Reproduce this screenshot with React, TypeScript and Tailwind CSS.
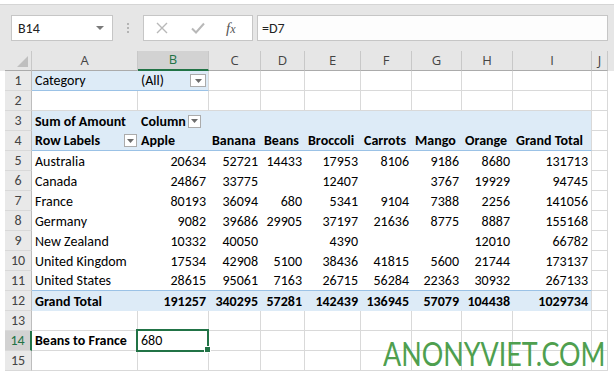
import React from 'react';

const W = ['w-[106px]', 'w-[71px]', 'w-[52px]', 'w-[44px]', 'w-[56px]', 'w-[51px]', 'w-[50px]', 'w-[51px]', 'w-[79px]', 'w-[16px]'];
const COLS = ['A', 'B', 'C', 'D', 'E', 'F', 'G', 'H', 'I', 'J'];
const FRUITS = ['Apple', 'Banana', 'Beans', 'Broccoli', 'Carrots', 'Mango', 'Orange', 'Grand Total'];

type Row = [string, ...(number | null)[]];

const DATA: Row[] = [
  ['Australia', 20634, 52721, 14433, 17953, 8106, 9186, 8680, 131713],
  ['Canada', 24867, 33775, null, 12407, null, 3767, 19929, 94745],
  ['France', 80193, 36094, 680, 5341, 9104, 7388, 2256, 141056],
  ['Germany', 9082, 39686, 29905, 37197, 21636, 8775, 8887, 155168],
  ['New Zealand', 10332, 40050, null, 4390, null, null, 12010, 66782],
  ['United Kingdom', 17534, 42908, 5100, 38436, 41815, 5600, 21744, 173137],
  ['United States', 28615, 95061, 7163, 26715, 56284, 22363, 30932, 267133],
];
const TOTAL: Row = ['Grand Total', 191257, 340295, 57281, 142439, 136945, 57079, 104438, 1029734];

const FONT = "font-['Carlito','Lato',sans-serif]";

function Drop({ w = 'w-[13px]' }: { w?: string }) {
  return (
    <span className={`${w} h-[13px] shrink-0 bg-white border border-[#ababab] flex items-center justify-center`}>
      <svg width="7" height="4" viewBox="0 0 7 4">
        <path d="M0 0 H7 L3.5 4 Z" fill="#6d6d6d" />
      </svg>
    </span>
  );
}

function RowHead({ n, active }: { n: number; active?: boolean }) {
  return (
    <div
      className={`w-[27px] h-full shrink-0 box-border flex items-center justify-center border-b border-[#d9d9d9] ${
        active ? 'bg-[#d2d2d2] text-[#217346] border-r-2 border-r-[#217346]' : 'bg-[#e9e9e9] text-[#444] border-r border-r-[#bdbdbd]'
      }`}
    >
      {n}
    </div>
  );
}

// plain grid cell
function G({ c, children, bold, right, extra = '' }: { c: number; children?: React.ReactNode; bold?: boolean; right?: boolean; extra?: string }) {
  return (
    <div
      className={`${W[c]} h-full shrink-0 box-border border-r border-b border-[#d9d9d9] flex items-center px-[3px] whitespace-nowrap ${
        right ? 'justify-end' : ''
      } ${bold ? 'font-bold' : ''} ${extra}`}
    >
      {children}
    </div>
  );
}

// pivot cell: no gridlines, col I keeps the right gridline
function P({
  c,
  children,
  bold,
  right,
  blue,
  bottom,
}: {
  c: number;
  children?: React.ReactNode;
  bold?: boolean;
  right?: boolean;
  blue?: boolean;
  bottom?: boolean;
}) {
  return (
    <div
      className={`${W[c]} h-full shrink-0 box-border flex items-center px-[3px] whitespace-nowrap ${right ? 'justify-end' : ''} ${
        bold ? 'font-bold' : ''
      } ${blue ? 'bg-[#ddebf7]' : ''} ${bottom ? 'border-b border-[#9bc2e6]' : ''} ${c === 8 ? 'border-r border-r-[#d9d9d9]' : ''}`}
    >
      {children}
    </div>
  );
}

function DataRow({ n, row, total, last }: { n: number; row: Row; total?: boolean; last?: boolean }) {
  return (
    <div className="flex h-[20px]">
      <RowHead n={n} />
      <P c={0} bold={total} blue={total} bottom={last}>
        {row[0]}
      </P>
      {row.slice(1).map((v, i) => (
        <P key={i} c={i + 1} right bold={total} blue={total} bottom={last}>
          {v ?? ''}
        </P>
      ))}
      <G c={9} />
    </div>
  );
}

function EmptyRow({ n }: { n: number }) {
  return (
    <div className="flex h-[20px]">
      <RowHead n={n} />
      {COLS.map((_, i) => (
        <G key={i} c={i} />
      ))}
    </div>
  );
}

export default function App() {
  return (
    <div className={`relative w-[614px] h-[375px] overflow-hidden bg-white text-[14px] text-black ${FONT}`}>
      {/* formula bar */}
      <div className="mt-[4px] h-[47px] border-t border-[#d5d5d5] bg-[#e6e6e6] flex items-start pt-[10px] pl-[11px]">
        <div className="w-[102px] h-[26px] box-border bg-white border border-[#c6c6c6] flex items-center justify-between pl-[6px] pr-[8px] text-[#222]">
          <span>B14</span>
          <svg width="8" height="4" viewBox="0 0 8 4">
            <path d="M0 0 H8 L4 4 Z" fill="#7a7a7a" />
          </svg>
        </div>
        <div className="w-[30px] h-[26px] flex flex-col items-center justify-center gap-[2px]">
          <span className="w-[2px] h-[2px] bg-[#b4b4b4]" />
          <span className="w-[2px] h-[2px] bg-[#b4b4b4]" />
          <span className="w-[2px] h-[2px] bg-[#b4b4b4]" />
        </div>
        <div className="w-[110px] h-[26px] box-border bg-white border border-[#c6c6c6] flex items-center pl-[12px]">
          <svg width="12" height="12" viewBox="0 0 12 12" className="mr-[23px]">
            <path d="M1 1 L11 11 M11 1 L1 11" stroke="#b8b8b8" strokeWidth="1.4" />
          </svg>
          <svg width="14" height="12" viewBox="0 0 14 12" className="mr-[21px]">
            <path d="M1 6.5 L5 10.5 L13 1.5" stroke="#b8b8b8" strokeWidth="2" fill="none" />
          </svg>
          <span className="font-['Liberation_Serif',serif] italic text-[15px] text-[#555]">
            f<span className="text-[12px]">x</span>
          </span>
        </div>
        <div className="ml-[4px] w-[351px] h-[26px] box-border bg-[#fdfdfd] border border-[#c6c6c6] flex items-center pl-[4px] text-[#222]">
          =D7
        </div>
      </div>

      {/* column headers */}
      <div className="flex h-[20px] bg-[#e6e6e6] pl-[5px] text-[#444] font-['Open_Sans',sans-serif] text-[13px]">
        <div className="w-[27px] h-full shrink-0 box-border border-r border-b border-[#ababab] border-r-[#c8c8c8] flex items-end justify-end p-[3px]">
          <svg width="11" height="11" viewBox="0 0 11 11">
            <path d="M11 0 V11 H0 Z" fill="#bfbfbf" />
          </svg>
        </div>
        {COLS.map((l, i) => (
          <div
            key={l}
            className={`${W[i]} h-full shrink-0 box-border border-r border-r-[#c8c8c8] flex items-center justify-center ${
              i === 1 ? 'bg-[#d2d2d2] border-b-2 border-b-[#217346] text-[#217346]' : 'border-b border-b-[#ababab]'
            }`}
          >
            {l}
          </div>
        ))}
      </div>

      {/* sheet */}
      <div className="pl-[5px]">
        {/* row 1 */}
        <div className="flex h-[20px]">
          <RowHead n={1} />
          <div className={`${W[0]} h-full shrink-0 box-border bg-[#ddebf7] border-b border-[#9bc2e6] flex items-center px-[3px]`}>Category</div>
          <div className={`${W[1]} h-full shrink-0 box-border bg-[#ddebf7] border-b border-[#9bc2e6] border-r border-r-[#d9d9d9] flex items-center justify-between pl-[3px] pr-[2px]`}>
            <span>(All)</span>
            <Drop w="w-[16px]" />
          </div>
          {COLS.slice(2).map((_, i) => (
            <G key={i} c={i + 2} />
          ))}
        </div>

        <EmptyRow n={2} />

        {/* row 3 */}
        <div className="flex h-[20px]">
          <RowHead n={3} />
          <P c={0} bold blue>
            Sum of Amount
          </P>
          <P c={1} bold blue>
            <span className="mr-[2px]">Column</span>
            <Drop />
          </P>
          {[2, 3, 4, 5, 6, 7, 8].map((c) => (
            <P key={c} c={c} blue />
          ))}
          <G c={9} />
        </div>

        {/* row 4 */}
        <div className="flex h-[20px]">
          <RowHead n={4} />
          <div className={`${W[0]} h-full shrink-0 box-border bg-[#ddebf7] border-b border-[#9bc2e6] flex items-center justify-between pl-[3px] pr-[1px] font-bold`}>
            <span>Row Labels</span>
            <Drop />
          </div>
          {FRUITS.map((f, i) => (
            <P key={f} c={i + 1} bold blue bottom>
              {f}
            </P>
          ))}
          <G c={9} />
        </div>

        {DATA.map((r, i) => (
          <DataRow key={r[0]} n={5 + i} row={r} last={i === DATA.length - 1} />
        ))}
        <DataRow n={12} row={TOTAL} total />

        <EmptyRow n={13} />

        {/* row 14 */}
        <div className="flex h-[20px]">
          <RowHead n={14} active />
          <G c={0} bold>
            Beans to France
          </G>
          <G c={1} extra="relative">
            680
            <span className="absolute left-[-2px] top-[-2px] w-[73px] h-[23px] box-border border-2 border-[#217346]" />
            <span className="absolute right-[-3px] bottom-[-3px] w-[5px] h-[5px] bg-[#217346] border border-white box-content" />
          </G>
          {COLS.slice(2).map((_, i) => (
            <G key={i} c={i + 2} />
          ))}
        </div>

        <EmptyRow n={15} />
      </div>

      {/* watermark */}
      <div className="absolute left-[383px] top-[338px] text-[32px] leading-none text-[#4f9f4f] font-['Lato',sans-serif] whitespace-nowrap origin-left scale-x-[0.84]">
        ANONYVIET.COM
      </div>
    </div>
  );
}
